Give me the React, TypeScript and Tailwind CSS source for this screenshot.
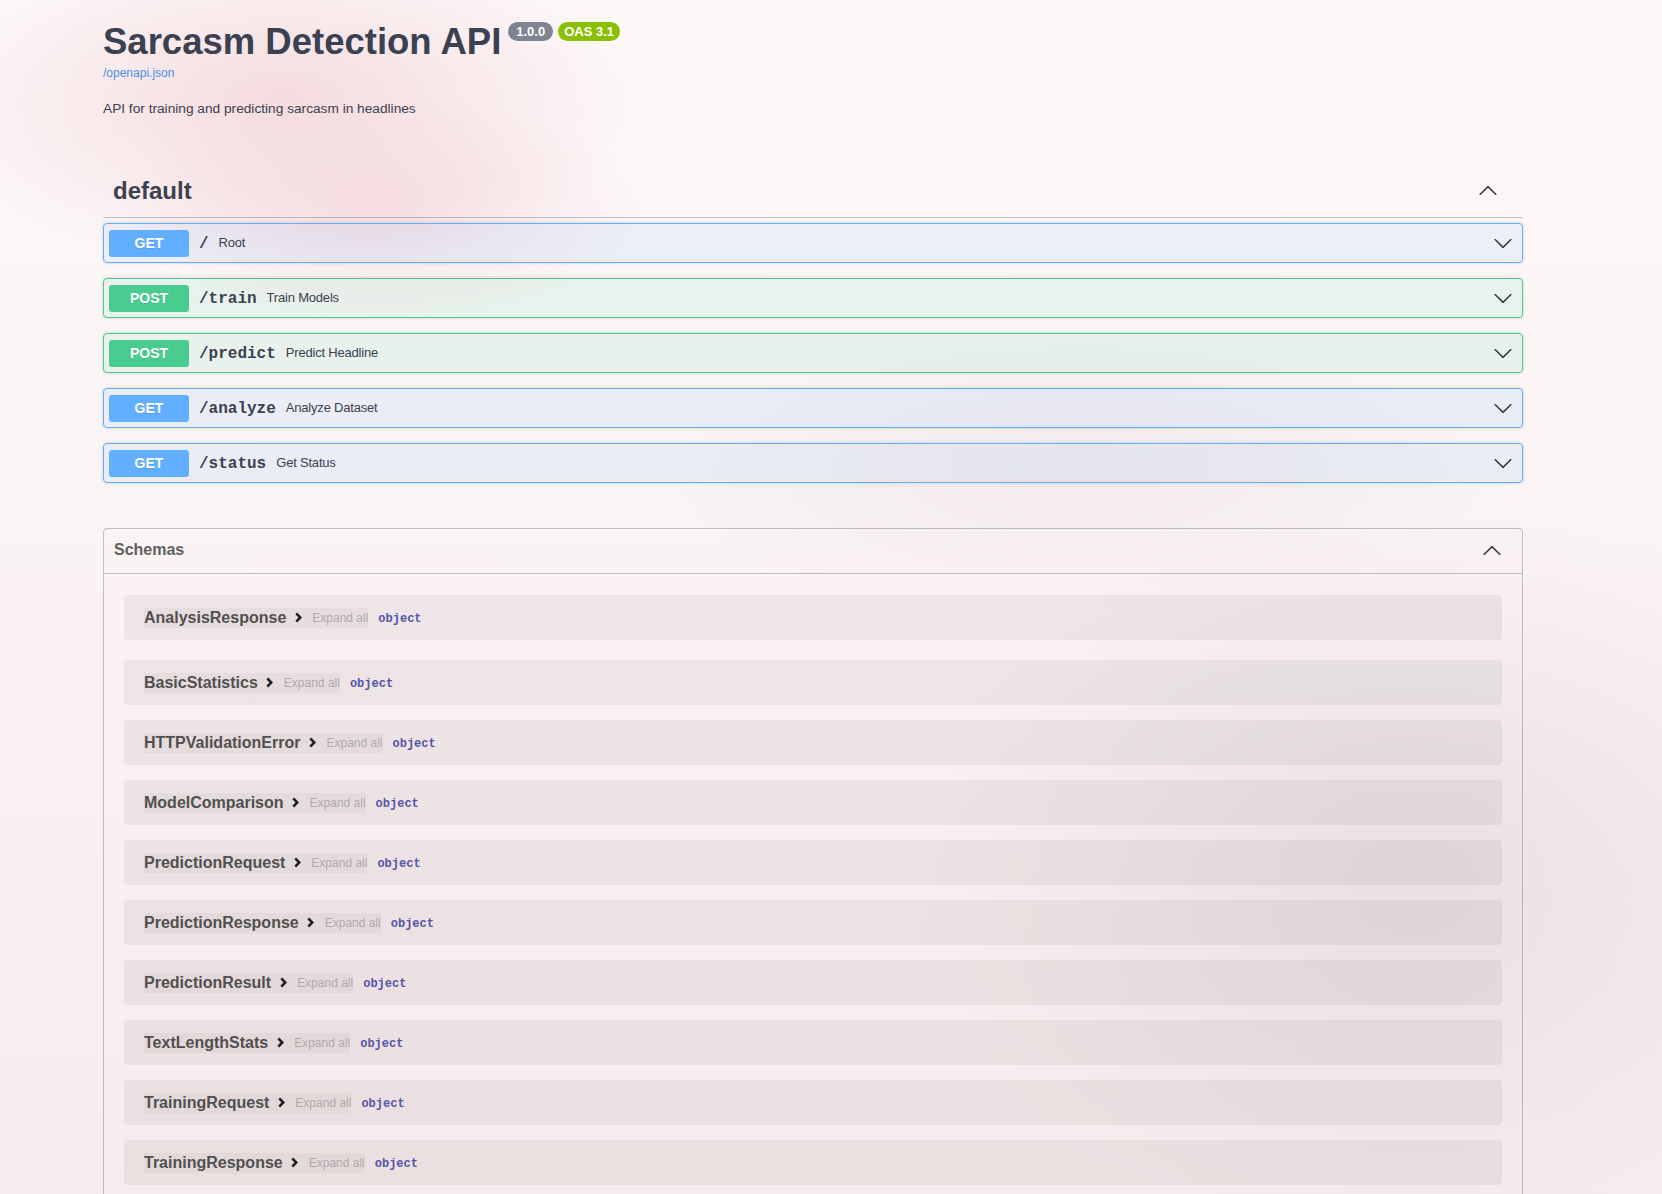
import React from "react";

type Op = { method: "GET" | "POST"; path: string; summary: string };

const ops: Op[] = [
  { method: "GET", path: "/", summary: "Root" },
  { method: "POST", path: "/train", summary: "Train Models" },
  { method: "POST", path: "/predict", summary: "Predict Headline" },
  { method: "GET", path: "/analyze", summary: "Analyze Dataset" },
  { method: "GET", path: "/status", summary: "Get Status" },
];

const schemas = [
  "AnalysisResponse",
  "BasicStatistics",
  "HTTPValidationError",
  "ModelComparison",
  "PredictionRequest",
  "PredictionResponse",
  "PredictionResult",
  "TextLengthStats",
  "TrainingRequest",
  "TrainingResponse",
];

function Arrow({ up = false }: { up?: boolean }) {
  return (
    <svg
      className={`w-5 h-5 shrink-0 ${up ? "rotate-180" : ""}`}
      viewBox="0 0 20 20"
      fill="#2f3440"
    >
      <path d="M17.418 6.109c.272-.268.709-.268.979 0s.271.701 0 .969l-7.908 7.83c-.27.268-.707.268-.979 0l-7.908-7.83c-.27-.268-.27-.701 0-.969.271-.268.709-.268.979 0L10 13.25l7.418-7.141z" />
    </svg>
  );
}

export default function App() {
  return (
    <div className="min-h-screen font-['Liberation_Sans',Arial,sans-serif] text-[#3b4151] bg-[radial-gradient(ellipse_22%_14%_at_17%_8%,rgba(238,196,202,0.55),transparent),radial-gradient(ellipse_16%_9%_at_23%_17%,rgba(240,200,206,0.45),transparent),radial-gradient(ellipse_30%_30%_at_85%_72%,rgba(215,205,208,0.45),transparent),radial-gradient(ellipse_25%_12%_at_65%_38%,rgba(225,215,225,0.35),transparent),linear-gradient(180deg,#fdf9f9_0%,#faf2f3_50%,#f7eced_100%)]">
      <div className="ml-[103px] w-[1420px] pt-[21px] pb-[20px]">
        {/* Info */}
        <div className="flex items-start">
          <h2 className="text-[36.5px] leading-[41px] font-bold text-[#3b4151]">Sarcasm Detection API</h2>
          <div className="flex gap-[5px] ml-[7px] mt-[1px]">
            <span className="rounded-full bg-[#7d8492] px-[8px] py-[2px] text-[13px] leading-[15px] font-bold text-white">1.0.0</span>
            <span className="rounded-full bg-[#89bf04] px-[6px] py-[2px] text-[13px] leading-[15px] font-bold text-white">OAS 3.1</span>
          </div>
        </div>
        <a className="block mt-[2px] text-[12px] leading-[18px] text-[#4990e2]">/openapi.json</a>
        <p className="mt-[16px] text-[13.7px] leading-[21px]">API for training and predicting sarcasm in headlines</p>

        {/* default tag */}
        <div className="mt-[46px] h-[53px] flex items-center justify-between pl-[10px] pr-[25px] border-b border-[#3b4151]/30">
          <h3 className="text-[24px] font-bold leading-[32px]">default</h3>
          <Arrow up />
        </div>

        <div className="mt-[5px] flex flex-col gap-[15px]">
          {ops.map((op) => {
            const get = op.method === "GET";
            return (
              <div
                key={op.path}
                className={`h-[40px] flex items-center px-[5px] rounded-[4px] border shadow-[0_0_3px_rgba(0,0,0,0.19)] ${
                  get ? "border-[#61affe] bg-[#61affe]/10" : "border-[#49cc90] bg-[#49cc90]/10"
                }`}
              >
                <span
                  className={`w-[80px] h-[27px] flex items-center justify-center rounded-[3px] text-[14px] font-bold text-white [text-shadow:0_1px_0_rgba(0,0,0,0.1)] ${
                    get ? "bg-[#61affe]" : "bg-[#49cc90]"
                  }`}
                >
                  {op.method}
                </span>
                <span className="px-[10px] pt-[2px] font-['Liberation_Mono','Courier_New',monospace] text-[16px] font-bold">{op.path}</span>
                <span className="text-[13px] tracking-[-0.2px] flex-1">{op.summary}</span>
                <span className="mr-[4px]">
                  <Arrow />
                </span>
              </div>
            );
          })}
        </div>

        {/* Schemas */}
        <section className="mt-[45px] border border-[#3b4151]/30 rounded-[4px]">
          <div className="h-[45px] flex items-center justify-between pl-[10px] pr-[20px] border-b border-[#3b4151]/30">
            <h4 className="text-[16px] font-bold text-[#606060] -mt-[3px]">Schemas</h4>
            <Arrow up />
          </div>
          <div className="pt-[21px]">
            {schemas.map((name, i) => (
              <div
                key={name}
                className={`mx-[20px] h-[45px] flex items-center px-[20px] rounded-[4px] bg-black/5 ${
                  i === 0 ? "mb-[20px]" : "mb-[15px]"
                }`}
              >
                <span className="flex items-center h-[20px] bg-black/[0.03]">
                  <span className="text-[16px] font-bold text-[#505050]">{name}</span>
                  <span className="ml-[2px] w-[20px] flex items-center justify-center">
                    <svg width="7" height="11" viewBox="0 0 7 11" fill="none" stroke="#1f2024" strokeWidth="2.6">
                      <polyline points="1.3,1.3 5.3,5.5 1.3,9.7" />
                    </svg>
                  </span>
                </span>
                <span className="h-[20px] flex items-center bg-black/[0.03] pl-[4px] text-[12px] text-[#b0a9ab]">Expand all</span>
                <span className="ml-[10px] pt-[2px] font-['Liberation_Mono','Courier_New',monospace] text-[12px] font-semibold text-[#55a]">object</span>
              </div>
            ))}
          </div>
        </section>
      </div>
    </div>
  );
}
